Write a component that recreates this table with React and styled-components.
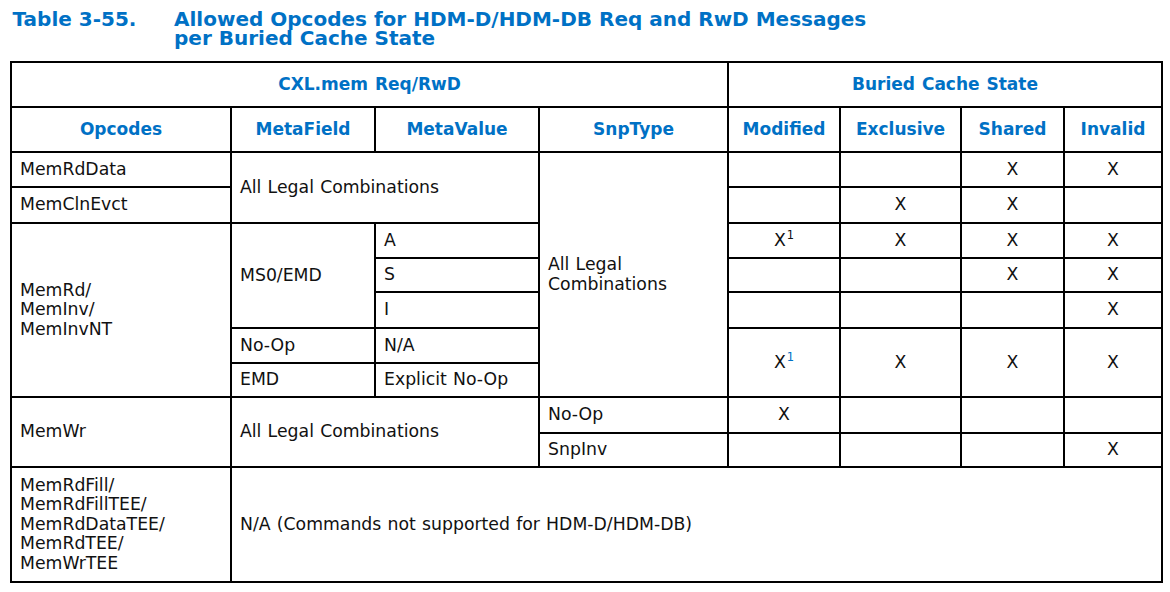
import React from "react";
import styled, { createGlobalStyle } from "styled-components";

const Global = createGlobalStyle`
  html, body { margin: 0; padding: 0; background: #ffffff; }
  body { font-family: "DejaVu Sans", Verdana, sans-serif; color: #111111; }
`;

const BLUE = "#0071c5";

const Page = styled.div`
  padding: 10px 0 0 10px;
`;

const Caption = styled.div`
  display: flex;
  font-family: "DejaVu Sans", Verdana, sans-serif;
  font-weight: bold;
  font-size: 20px;
  line-height: 19px;
  color: ${BLUE};
  margin-bottom: 13px;
`;

const CaptionNumber = styled.div`
  flex: none;
  box-sizing: border-box;
  width: 164px;
  padding-left: 2.5px;
`;

const CaptionTitle = styled.div`
  display: flex;
  flex-direction: column;
`;

const CaptionLine = styled.div`
  height: 19px;
`;

const Grid = styled.div`
  display: grid;
  grid-template-columns: 220px 144px 164px 189px 112px 121px 103px 98px;
  grid-template-rows: 45px 45px 35px 36px 35px 34px 36px 35px 34px 36px 34px 115px;
  width: max-content;
  border-top: 2px solid #000;
  border-left: 2px solid #000;
`;

const Cell = styled.div`
  box-sizing: border-box;
  grid-column: ${(p) => p.$col} / span ${(p) => p.$cs || 1};
  grid-row: ${(p) => p.$row} / span ${(p) => p.$rs || 1};
  border-right: 2px solid #000;
  border-bottom: 2px solid #000;
  display: flex;
  flex-direction: column;
  justify-content: center;
  align-items: ${(p) => (p.$center ? "center" : "flex-start")};
  padding: 0 8px;
  font-size: 17.3px;
  line-height: 19.6px;
  word-spacing: 0.7px;
  color: #111111;
  white-space: nowrap;
`;

const HeadCell = styled(Cell)`
  align-items: center;
  font-weight: bold;
  font-size: 17px;
  word-spacing: 1px;
  color: ${BLUE};
`;

const Line = styled.div``;

const Sup = styled.span`
  font-size: 11.5px;
  line-height: 0;
  vertical-align: 7px;
  margin-left: 1px;
  color: ${(p) => (p.$blue ? BLUE : "#111111")};
`;

const Mark = ({ note, blue }) => (
  <span>
    X{note ? <Sup $blue={blue}>1</Sup> : null}
  </span>
);

const Lines = ({ items }) => items.map((t) => <Line key={t}>{t}</Line>);

const X = (props) => <Cell $center {...props}><Mark /></Cell>;
const Empty = (props) => <Cell {...props} />;

export default function App() {
  return (
    <>
      <Global />
      <Page>
        <Caption>
          <CaptionNumber>Table 3-55.</CaptionNumber>
          <CaptionTitle>
            <CaptionLine>Allowed Opcodes for HDM-D/HDM-DB Req and RwD Messages</CaptionLine>
            <CaptionLine>per Buried Cache State</CaptionLine>
          </CaptionTitle>
        </Caption>

        <Grid>
          <HeadCell $row={1} $col={1} $cs={4}>CXL.mem Req/RwD</HeadCell>
          <HeadCell $row={1} $col={5} $cs={4}>Buried Cache State</HeadCell>

          <HeadCell $row={2} $col={1}>Opcodes</HeadCell>
          <HeadCell $row={2} $col={2}>MetaField</HeadCell>
          <HeadCell $row={2} $col={3}>MetaValue</HeadCell>
          <HeadCell $row={2} $col={4}>SnpType</HeadCell>
          <HeadCell $row={2} $col={5}>Modified</HeadCell>
          <HeadCell $row={2} $col={6}>Exclusive</HeadCell>
          <HeadCell $row={2} $col={7}>Shared</HeadCell>
          <HeadCell $row={2} $col={8}>Invalid</HeadCell>

          <Cell $row={3} $col={1}>MemRdData</Cell>
          <Cell $row={3} $col={2} $cs={2} $rs={2}>All Legal Combinations</Cell>
          <Cell $row={3} $col={4} $rs={7}>
            <Lines items={["All Legal", "Combinations"]} />
          </Cell>
          <Empty $row={3} $col={5} />
          <Empty $row={3} $col={6} />
          <X $row={3} $col={7} />
          <X $row={3} $col={8} />

          <Cell $row={4} $col={1}>MemClnEvct</Cell>
          <Empty $row={4} $col={5} />
          <X $row={4} $col={6} />
          <X $row={4} $col={7} />
          <Empty $row={4} $col={8} />

          <Cell $row={5} $col={1} $rs={5}>
            <Lines items={["MemRd/", "MemInv/", "MemInvNT"]} />
          </Cell>
          <Cell $row={5} $col={2} $rs={3}>MS0/EMD</Cell>
          <Cell $row={5} $col={3}>A</Cell>
          <Cell $row={5} $col={5} $center><Mark note /></Cell>
          <X $row={5} $col={6} />
          <X $row={5} $col={7} />
          <X $row={5} $col={8} />

          <Cell $row={6} $col={3}>S</Cell>
          <Empty $row={6} $col={5} />
          <Empty $row={6} $col={6} />
          <X $row={6} $col={7} />
          <X $row={6} $col={8} />

          <Cell $row={7} $col={3}>I</Cell>
          <Empty $row={7} $col={5} />
          <Empty $row={7} $col={6} />
          <Empty $row={7} $col={7} />
          <X $row={7} $col={8} />

          <Cell $row={8} $col={2}>No-Op</Cell>
          <Cell $row={8} $col={3}>N/A</Cell>
          <Cell $row={8} $col={5} $rs={2} $center><Mark note blue /></Cell>
          <X $row={8} $col={6} $rs={2} />
          <X $row={8} $col={7} $rs={2} />
          <X $row={8} $col={8} $rs={2} />

          <Cell $row={9} $col={2}>EMD</Cell>
          <Cell $row={9} $col={3}>Explicit No-Op</Cell>

          <Cell $row={10} $col={1} $rs={2}>MemWr</Cell>
          <Cell $row={10} $col={2} $cs={2} $rs={2}>All Legal Combinations</Cell>
          <Cell $row={10} $col={4}>No-Op</Cell>
          <X $row={10} $col={5} />
          <Empty $row={10} $col={6} />
          <Empty $row={10} $col={7} />
          <Empty $row={10} $col={8} />

          <Cell $row={11} $col={4}>SnpInv</Cell>
          <Empty $row={11} $col={5} />
          <Empty $row={11} $col={6} />
          <Empty $row={11} $col={7} />
          <X $row={11} $col={8} />

          <Cell $row={12} $col={1}>
            <Lines items={["MemRdFill/", "MemRdFillTEE/", "MemRdDataTEE/", "MemRdTEE/", "MemWrTEE"]} />
          </Cell>
          <Cell $row={12} $col={2} $cs={7}>N/A (Commands not supported for HDM-D/HDM-DB)</Cell>
        </Grid>
      </Page>
    </>
  );
}
